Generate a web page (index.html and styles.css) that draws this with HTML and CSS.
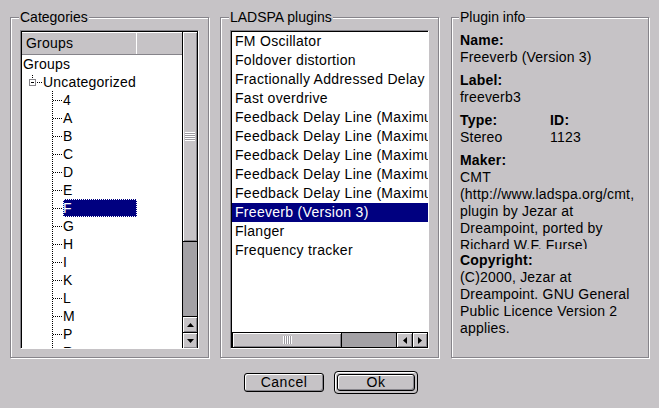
FILE: index.html
```html
<!DOCTYPE html>
<html lang="en">
<head>
<meta charset="utf-8">
<title>LADSPA plugins</title>
<link rel="stylesheet" href="styles.css">
</head>
<body>
<div class="dialog">
  <div class="panels">
    <fieldset class="frame frame-cat">
      <legend>Categories</legend>
      <div class="box box-cat">
        <div class="box-in row-dir">
          <div class="tree-area">
            <div class="tree-header">
              <div class="hcol hcol-main">Groups</div>
              <div class="hcol hcol-rest"></div>
            </div>
            <div class="tree">
              <div class="trow root">Groups</div>
              <div class="trow branch">
                <svg class="expander" width="18" height="18" viewBox="0 0 18 18">
                  <rect x="7" y="2" width="1" height="1" fill="#000"/>
                  <rect x="7" y="4" width="1" height="1" fill="#000"/>
                  <rect x="4.5" y="6.5" width="6" height="6" fill="#fff" stroke="#86848a" stroke-width="1"/>
                  <rect x="6" y="9" width="3" height="1" fill="#000"/>
                  <rect x="12" y="9" width="1" height="1" fill="#000"/>
                  <rect x="14" y="9" width="1" height="1" fill="#000"/>
                  <rect x="16" y="9" width="1" height="1" fill="#000"/>
                </svg>
                <span class="lbl">Uncategorized</span>
              </div>
              <div class="children">
                <div class="trow leaf"><span class="conn"></span><span class="lbl">4</span></div>
                <div class="trow leaf"><span class="conn"></span><span class="lbl">A</span></div>
                <div class="trow leaf"><span class="conn"></span><span class="lbl">B</span></div>
                <div class="trow leaf"><span class="conn"></span><span class="lbl">C</span></div>
                <div class="trow leaf"><span class="conn"></span><span class="lbl">D</span></div>
                <div class="trow leaf"><span class="conn"></span><span class="lbl">E</span></div>
                <div class="trow leaf"><span class="conn"></span><span class="lbl sel">F</span></div>
                <div class="trow leaf"><span class="conn"></span><span class="lbl">G</span></div>
                <div class="trow leaf"><span class="conn"></span><span class="lbl">H</span></div>
                <div class="trow leaf"><span class="conn"></span><span class="lbl">I</span></div>
                <div class="trow leaf"><span class="conn"></span><span class="lbl">K</span></div>
                <div class="trow leaf"><span class="conn"></span><span class="lbl">L</span></div>
                <div class="trow leaf"><span class="conn"></span><span class="lbl">M</span></div>
                <div class="trow leaf"><span class="conn"></span><span class="lbl">P</span></div>
                <div class="trow leaf"><span class="conn"></span><span class="lbl">R</span></div>
                <div class="trow leaf"><span class="conn"></span><span class="lbl">S</span></div>
              </div>
            </div>
          </div>
          <div class="vscroll">
            <div class="thumb thumb-v"><span class="grip-h"></span></div>
            <div class="trough"></div>
            <div class="abtn abtn-v">
              <svg width="7" height="4" viewBox="0 0 7 4"><polygon points="3.5,0 7,4 0,4" fill="#000"/></svg>
            </div>
            <div class="abtn abtn-v">
              <svg width="7" height="4" viewBox="0 0 7 4"><polygon points="0,0 7,0 3.5,4" fill="#000"/></svg>
            </div>
          </div>
        </div>
      </div>
    </fieldset>

    <fieldset class="frame frame-lad">
      <legend>LADSPA plugins</legend>
      <div class="box box-lad">
        <div class="box-in col-dir">
          <div class="plist">
            <div class="item">FM Oscillator</div>
            <div class="item">Foldover distortion</div>
            <div class="item">Fractionally Addressed Delay Line</div>
            <div class="item">Fast overdrive</div>
            <div class="item">Feedback Delay Line (Maximum Delay 1s)</div>
            <div class="item">Feedback Delay Line (Maximum Delay 5s)</div>
            <div class="item">Feedback Delay Line (Maximum Delay 60s)</div>
            <div class="item">Feedback Delay Line (Maximum Delay 0.01s)</div>
            <div class="item">Feedback Delay Line (Maximum Delay 0.1s)</div>
            <div class="item sel">Freeverb (Version 3)</div>
            <div class="item">Flanger</div>
            <div class="item">Frequency tracker</div>
          </div>
          <div class="hscroll">
            <div class="thumb thumb-h"><span class="grip-v"></span></div>
            <div class="trough"></div>
            <div class="abtn abtn-h abtn-left">
              <svg width="4" height="7" viewBox="0 0 4 7"><polygon points="4,0 4,7 0,3.5" fill="#000"/></svg>
            </div>
            <div class="abtn abtn-h abtn-right">
              <svg width="4" height="7" viewBox="0 0 4 7"><polygon points="0,0 4,3.5 0,7" fill="#000"/></svg>
            </div>
          </div>
        </div>
      </div>
    </fieldset>

    <fieldset class="frame frame-info">
      <legend>Plugin info</legend>
      <div class="info">
        <div class="field"><div class="lab">Name:</div><div class="val">Freeverb (Version 3)</div></div>
        <div class="field"><div class="lab">Label:</div><div class="val">freeverb3</div></div>
        <div class="field pair">
          <div class="pcol pcol-type"><div class="lab">Type:</div><div class="val">Stereo</div></div>
          <div class="pcol"><div class="lab">ID:</div><div class="val">1123</div></div>
        </div>
        <div class="field field-maker"><div class="lab">Maker:</div><div class="val maker">CMT (http://www.ladspa.org/cmt, plugin by Jezar at Dreampoint, ported by Richard W.F. Furse)</div></div>
        <div class="field"><div class="lab">Copyright:</div><div class="val">(C)2000, Jezar at Dreampoint. GNU General Public Licence Version 2 applies.</div></div>
      </div>
    </fieldset>
  </div>

  <div class="buttons">
    <button class="btn" type="button">Cancel</button>
    <div class="btn-default"><button class="btn btn-inner" type="button">Ok</button></div>
  </div>
</div>
</body>
</html>
```

FILE: styles.css
```css
* { box-sizing: border-box; }

html, body {
  margin: 0;
  padding: 0;
}

body {
  width: 659px;
  height: 408px;
  overflow: hidden;
  background: #c6c3c6;
  color: #000;
  font-family: "Liberation Sans", Arial, sans-serif;
  font-size: 14px;
  letter-spacing: 0.2px;
}

.dialog {
  padding: 10px 10px 0 10px;
}

.panels {
  display: flex;
  align-items: stretch;
}

/* etched group frames */
.frame {
  margin: 0;
  min-width: 0;
  border: 1px solid #86848a;
  box-shadow: inset 1px 1px 0 #fff, 1px 1px 0 #fff;
  padding: 5px 9px 8px 9px;
}

.frame legend {
  margin-left: -1px;
  padding: 0 1px;
  line-height: 15px;
  letter-spacing: 0;
  background: #c6c3c6;
}

.frame-cat { width: 199px; }
.frame-lad { width: 219px; margin-left: 11px; }
.frame-info { width: 198px; margin-left: 12px; padding-left: 8px; padding-right: 9px; }

/* sunken list boxes */
.box {
  height: 319px;
  background: #fff;
  border: 1px solid;
  border-color: #86848a #fff #fff #86848a;
}

.box-cat { width: 179px; }
.box-lad { width: 199px; }

.box-in {
  height: 100%;
  border-top: 1px solid #000;
  border-left: 1px solid #000;
  overflow: hidden;
}

.row-dir { display: flex; }
.col-dir { display: flex; flex-direction: column; }

/* tree */
.tree-area {
  flex: 1;
  min-width: 0;
  display: flex;
  flex-direction: column;
  overflow: hidden;
}

.tree-header {
  height: 23px;
  flex: none;
  display: flex;
  background: #c6c3c6;
  border-bottom: 1px solid #86848a;
  box-shadow: inset 0 1px 0 #fff;
}

.hcol {
  line-height: 22px;
  white-space: nowrap;
}

.hcol-main {
  width: 114px;
  padding-left: 4px;
}

.hcol-rest {
  flex: 1;
  border-left: 1px solid #fff;
}

.tree {
  flex: 1;
  overflow: hidden;
}

.trow {
  height: 18px;
  line-height: 18px;
  display: flex;
  align-items: center;
  white-space: nowrap;
}

.root { padding-left: 1px; }

.branch { padding-left: 3px; }

.expander {
  display: block;
  flex: none;
}

.children {
  background-image: repeating-linear-gradient(to bottom, #000 0 1px, transparent 1px 2px);
  background-repeat: no-repeat;
  background-position: 30px 0;
  background-size: 1px 100%;
}

.conn {
  display: block;
  flex: none;
  width: 10px;
  height: 1px;
  margin-left: 31px;
  background: repeating-linear-gradient(to right, #000 0 1px, transparent 1px 2px);
}

.leaf .lbl {
  display: block;
  width: 74px;
  height: 18px;
}

.leaf .lbl.sel {
  background: #000080;
  color: #fff;
  outline: 1px dotted #fff;
  outline-offset: -1px;
}

/* scrollbars */
.vscroll {
  width: 16px;
  flex: none;
  display: flex;
  flex-direction: column;
  border-left: 1px solid #000;
  border-right: 1px solid #000;
  background: #c6c3c6;
}

.thumb {
  display: flex;
  align-items: center;
  justify-content: center;
  background: #c6c3c6;
  box-shadow: inset 1px 1px 0 #fff, inset -1px -1px 0 #86848a;
}

.thumb-v {
  height: 210px;
  flex: none;
  border-bottom: 1px solid #000;
}

.grip-h {
  display: block;
  width: 10px;
  height: 9px;
  background: repeating-linear-gradient(to bottom, #fff 0 1px, #9c9aa0 1px 2px);
}

.trough {
  flex: 1;
  background: #a3a1a5;
}

.abtn {
  display: flex;
  align-items: center;
  justify-content: center;
  background: #c6c3c6;
  box-shadow: inset 1px 1px 0 #fff, inset -1px -1px 0 #86848a;
}

.abtn svg { display: block; }

.abtn-v {
  height: 16px;
  flex: none;
  border-top: 1px solid #000;
}

.plist {
  flex: 1;
  min-height: 0;
  overflow: hidden;
}

.item {
  height: 19px;
  line-height: 19px;
  padding-left: 3px;
  white-space: nowrap;
  overflow: hidden;
  letter-spacing: 0.3px;
}

.item.sel {
  background: #000080;
  color: #fff;
}

.hscroll {
  height: 16px;
  flex: none;
  display: flex;
  border: 1px solid #000;
  background: #c6c3c6;
}

.thumb-h {
  width: 109px;
  flex: none;
  border-right: 1px solid #000;
}

.grip-v {
  display: block;
  width: 9px;
  height: 8px;
  background: repeating-linear-gradient(to right, #fff 0 1px, #9c9aa0 1px 2px);
}

.abtn-h {
  flex: none;
  border-left: 1px solid #000;
}

.abtn-left { width: 16px; }
.abtn-right { width: 15px; }

/* plugin info */
.info {
  padding-top: 1px;
}

.field {
  margin-bottom: 5px;
}

.lab {
  font-weight: bold;
  height: 18px;
  line-height: 18px;
}

.val {
  line-height: 17px;
}

.pair {
  display: flex;
}

.pcol-type {
  width: 90px;
}

.field-maker {
  margin-bottom: 2px;
}

.maker {
  height: 80px;
  overflow: hidden;
}

/* buttons */
.buttons {
  margin-top: 13px;
  height: 23px;
  display: flex;
  align-items: center;
  justify-content: center;
  gap: 10px;
  padding-left: 3px;
}

.btn {
  display: block;
  width: 80px;
  height: 19px;
  margin: 0;
  padding: 0;
  border: 1px solid #000;
  border-radius: 3px;
  background: #c6c3c6;
  box-shadow: inset 1px 1px 0 #fff, inset -1px -1px 0 #86848a;
  color: #000;
  font-family: "Liberation Sans", Arial, sans-serif;
  font-size: 14px;
  letter-spacing: 0.5px;
  line-height: 17px;
  text-align: center;
}

.btn-default {
  border: 1px solid #000;
  border-radius: 4px;
  padding: 2px;
  background: #c6c3c6;
  box-shadow: inset 1px 1px 0 #fff;
}

.btn-inner {
  width: 78px;
  height: 17px;
  line-height: 15px;
}
```
